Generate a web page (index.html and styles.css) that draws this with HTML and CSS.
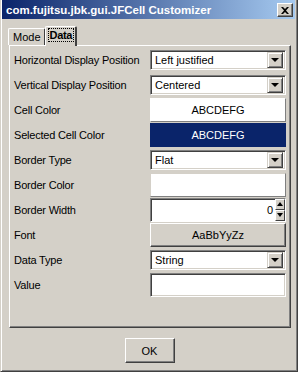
FILE: index.html
```html
<!DOCTYPE html>
<html>
<head>
<meta charset="utf-8">
<link rel="stylesheet" href="styles.css">
</head>
<body>
<div class="window">
  <div class="titlebar">
    <span class="title">com.fujitsu.jbk.gui.JFCell Customizer</span>
    <span class="close"><svg width="8" height="7" viewBox="0 0 8 7"><path d="M0 0h2l2 2 2-2h2L5 3.5 8 7H6L4 5 2 7H0l3-3.5z" fill="#000"/></svg></span>
  </div>
  <div class="tabs">
    <div class="tab">Mode</div>
    <div class="tab active"><span class="focus">Data</span></div>
  </div>
  <div class="panel">
    <div class="grid">
      <div class="label">Horizontal Display Position</div>
      <div class="cell"><div class="combo"><span class="val">Left justified</span><span class="arrow"><i></i></span></div></div>

      <div class="label">Vertical Display Position</div>
      <div class="cell"><div class="combo"><span class="val">Centered</span><span class="arrow"><i></i></span></div></div>

      <div class="label">Cell Color</div>
      <div class="cell"><div class="swatch white">ABCDEFG</div></div>

      <div class="label">Selected Cell Color</div>
      <div class="cell"><div class="swatch navy">ABCDEFG</div></div>

      <div class="label">Border Type</div>
      <div class="cell"><div class="combo"><span class="val">Flat</span><span class="arrow"><i></i></span></div></div>

      <div class="label">Border Color</div>
      <div class="cell"><div class="swatch blank"></div></div>

      <div class="label">Border Width</div>
      <div class="cell"><div class="spinner"><span class="num">0</span><span class="spin"><b class="up"><i></i></b><b class="down"><i></i></b></span></div></div>

      <div class="label">Font</div>
      <div class="cell"><div class="fontbtn">AaBbYyZz</div></div>

      <div class="label">Data Type</div>
      <div class="cell"><div class="combo"><span class="val">String</span><span class="arrow"><i></i></span></div></div>

      <div class="label">Value</div>
      <div class="cell"><div class="field"></div></div>
    </div>
  </div>
  <div class="footer">
    <div class="okbtn">OK</div>
  </div>
</div>
</body>
</html>
```

FILE: styles.css
```css
html, body {
  margin: 0;
  padding: 0;
  background: #d4d0c8;
}
body {
  font-family: "Liberation Sans", Arial, sans-serif;
  font-size: 11px;
  color: #000;
}
.window {
  width: 298px;
  height: 372px;
  box-sizing: border-box;
  border-left: 1px solid #d4d0c8;
  border-right: 1px solid #404040;
  border-bottom: 1px solid #404040;
  box-shadow: inset 1px 0 0 #fff, inset -1px -1px 0 #808080;
  padding: 0 2px 0 1px;
  display: flex;
  flex-direction: column;
}
.titlebar {
  height: 19px;
  background: linear-gradient(to right, #0a246a, #a6caf0);
  display: flex;
  align-items: center;
  justify-content: space-between;
  padding: 0 2px 0 4px;
}
.title {
  color: #fff;
  font-weight: bold;
  font-size: 11.5px;
  white-space: nowrap;
}
.close {
  width: 16px;
  height: 14px;
  box-sizing: border-box;
  background: #d4d0c8;
  border-top: 1px solid #fff;
  border-left: 1px solid #fff;
  border-right: 1px solid #404040;
  border-bottom: 1px solid #404040;
  box-shadow: inset -1px -1px 0 #808080;
  display: flex;
  align-items: center;
  justify-content: center;
  margin-top: 1px;
}
.tabs {
  display: flex;
  align-items: flex-end;
  height: 26px;
  padding-left: 6px;
}
.tab {
  height: 17px;
  box-sizing: border-box;
  padding: 2px 3px 0 4px;
  border-top: 1px solid #fff;
  border-left: 1px solid #fff;
  border-right: 2px solid #404040;
  border-top-left-radius: 2px;
  border-top-right-radius: 2px;
}
.tab.active {
  height: 20px;
  padding: 2px 2px 0 3px;
  font-weight: bold;
  letter-spacing: -0.3px;
  margin-left: -1px;
  position: relative;
  background: #d4d0c8;
  z-index: 1;
  margin-bottom: -1px;
}
.focus {
  outline: 1px dotted #000;
  padding: 0 1px;
}
.panel {
  margin-left: 7px;
  width: 282px;
  height: 283px;
  box-sizing: border-box;
  border-top: 1px solid #fff;
  border-left: 1px solid #fff;
  border-right: 1px solid #404040;
  border-bottom: 1px solid #404040;
  box-shadow: inset -1px -1px 0 #808080;
  padding: 1px 4px 0 4px;
}
.grid {
  display: grid;
  grid-template-columns: 1fr 136px;
  grid-auto-rows: 25px;
}
.label {
  display: flex;
  align-items: center;
  white-space: nowrap;
  padding-top: 1px;
  letter-spacing: -0.2px;
}
.cell {
  display: flex;
  align-items: center;
}
.combo {
  width: 100%;
  height: 20px;
  box-sizing: border-box;
  background: #fff;
  border-top: 1px solid #808080;
  border-left: 1px solid #808080;
  border-right: 1px solid #fff;
  border-bottom: 1px solid #fff;
  box-shadow: inset 1px 1px 0 #404040, inset -1px -1px 0 #d4d0c8;
  display: flex;
  align-items: center;
  padding: 2px;
}
.val {
  flex: 1;
  padding-left: 2px;
}
.arrow {
  width: 16px;
  height: 16px;
  box-sizing: border-box;
  background: #d4d0c8;
  border-top: 1px solid #d4d0c8;
  border-left: 1px solid #d4d0c8;
  border-right: 1px solid #404040;
  border-bottom: 1px solid #404040;
  box-shadow: inset 1px 1px 0 #fff, inset -1px -1px 0 #808080;
  display: flex;
  align-items: center;
  justify-content: center;
}
.arrow i {
  width: 0;
  height: 0;
  border-left: 4px solid transparent;
  border-right: 4px solid transparent;
  border-top: 4px solid #000;
}
.swatch {
  width: 100%;
  height: 24px;
  box-sizing: border-box;
  display: flex;
  align-items: center;
  justify-content: center;
  border-top: 1px solid #fff;
  border-left: 1px solid #fff;
  border-right: 1px solid #808080;
  border-bottom: 1px solid #808080;
}
.swatch.white {
  background: #fff;
}
.swatch.navy {
  background: #0a246a;
  color: #fff;
  border-color: #0a246a;
}
.swatch.blank {
  background: #fff;
  border-top-color: #d4d0c8;
  border-left-color: #d4d0c8;
}
.spinner {
  width: 100%;
  height: 24px;
  box-sizing: border-box;
  background: #fff;
  border-top: 1px solid #808080;
  border-left: 1px solid #808080;
  border-right: 1px solid #fff;
  border-bottom: 1px solid #fff;
  box-shadow: inset 1px 1px 0 #404040;
  display: flex;
  align-items: stretch;
}
.num {
  flex: 1;
  text-align: right;
  padding-right: 2px;
  display: flex;
  align-items: center;
  justify-content: flex-end;
}
.spin {
  width: 10px;
  display: flex;
  flex-direction: column;
  background: #d4d0c8;
}
.spin b {
  flex: 1;
  box-sizing: border-box;
  border-top: 1px solid #fff;
  border-left: 1px solid #fff;
  border-right: 1px solid #404040;
  border-bottom: 1px solid #404040;
  display: flex;
  flex-direction: column;
  align-items: center;
  justify-content: center;
}
.spin .up i {
  width: 0;
  height: 0;
  border-left: 3px solid transparent;
  border-right: 3px solid transparent;
  border-bottom: 4px solid #000;
}
.spin .down i {
  width: 0;
  height: 0;
  border-left: 3px solid transparent;
  border-right: 3px solid transparent;
  border-top: 4px solid #000;
}
.fontbtn {
  width: 100%;
  height: 24px;
  box-sizing: border-box;
  background: #d4d0c8;
  border-top: 1px solid #fff;
  border-left: 1px solid #fff;
  border-right: 1px solid #404040;
  border-bottom: 1px solid #404040;
  box-shadow: inset -1px -1px 0 #808080;
  display: flex;
  align-items: center;
  justify-content: center;
}
.field {
  width: 100%;
  height: 24px;
  box-sizing: border-box;
  background: #fff;
  border-top: 1px solid #808080;
  border-left: 1px solid #808080;
  border-right: 1px solid #fff;
  border-bottom: 1px solid #fff;
  box-shadow: inset 1px 1px 0 #404040, inset -1px -1px 0 #d4d0c8;
}
.footer {
  display: flex;
  justify-content: center;
  padding-top: 10px;
  padding-left: 2px;
}
.okbtn {
  width: 50px;
  height: 25px;
  box-sizing: border-box;
  background: #d4d0c8;
  border-top: 1px solid #fff;
  border-left: 1px solid #fff;
  border-right: 1px solid #404040;
  border-bottom: 1px solid #404040;
  box-shadow: inset -1px -1px 0 #808080;
  display: flex;
  align-items: center;
  justify-content: center;
}
```
